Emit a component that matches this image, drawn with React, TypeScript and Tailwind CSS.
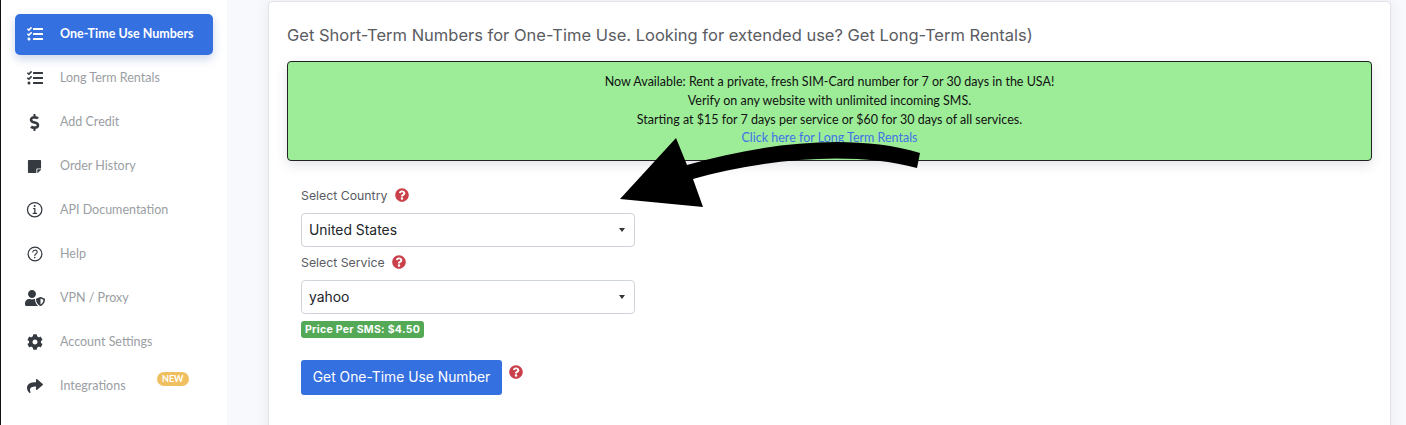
import React from 'react';
import { FaTasks, FaDollarSign, FaStickyNote, FaUserShield, FaCog, FaShare, FaQuestionCircle } from 'react-icons/fa';
import { IoInformationCircleOutline, IoHelpCircleOutline } from 'react-icons/io5';

const navItems = [
  { label: 'One-Time Use Numbers', icon: <FaTasks size={16} />, active: true },
  { label: 'Long Term Rentals', icon: <FaTasks size={16} /> },
  { label: 'Add Credit', icon: <FaDollarSign size={17} /> },
  { label: 'Order History', icon: <FaStickyNote size={15} /> },
  { label: 'API Documentation', icon: <IoInformationCircleOutline size={20} /> },
  { label: 'Help', icon: <IoHelpCircleOutline size={20} /> },
  { label: 'VPN / Proxy', icon: <FaUserShield size={20} /> },
  { label: 'Account Settings', icon: <FaCog size={16} /> },
  { label: 'Integrations', icon: <FaShare size={16} />, badge: 'NEW' },
];

function HelpDot({ className = '' }: { className?: string }) {
  return <FaQuestionCircle size={14} className={`text-[#c9404a] ${className}`} />;
}

function FakeSelect({ value }: { value: string }) {
  return (
    <div className="flex h-[34px] w-[334px] items-center justify-between rounded-[4px] border border-[#ced4da] bg-white pl-[7px] pr-[9px] font-['Inter',sans-serif] text-[13.9px] text-[#212529]">
      <span>{value}</span>
      <span className="h-0 w-0 border-x-[3px] border-t-[4px] border-x-transparent border-t-[#333]" />
    </div>
  );
}

export default function App() {
  return (
    <div className="relative flex h-[425px] w-[1406px] overflow-hidden bg-[#f8f9fc] font-['Lato',sans-serif]">
      <aside className="h-full w-[227px] shrink-0 border-l border-[#111] bg-white pl-[14px] pr-[14px] pt-[14px]">
        {navItems.map(item => (
          <div
            key={item.label}
            className={`relative mb-[3px] flex h-[41px] items-center rounded-[5px] pb-[1px] text-[12.5px] ${
              item.active
                ? 'bg-[#3570e0] font-bold text-white shadow-[0_4px_10px_rgba(53,90,170,0.25)]'
                : 'text-[#9a9ea3]'
            }`}
          >
            <span className={`flex w-[39px] shrink-0 justify-center ${item.active ? 'text-white' : 'text-[#343a40]'}`}>
              {item.icon}
            </span>
            <span className="pl-[6px]">{item.label}</span>
            {item.badge && (
              <span className="absolute left-[142px] top-[6px] rounded-full bg-[#f0c060] px-[5px] text-[9px] font-bold leading-[14px] text-white">
                {item.badge}
              </span>
            )}
          </div>
        ))}
      </aside>

      <main className="flex-1 pl-[41px] pr-[15px] pt-[1px]">
        <div className="h-[440px] rounded-[4px] border border-[#e3e4e8] bg-white pl-[18px] pr-[18px] pt-[23px] shadow-[0_0_14px_rgba(60,70,100,0.08)]">
          <h1 className="font-['Inter',sans-serif] text-[16.5px] leading-[21px] text-[#5a5c62]">
            Get Short-Term Numbers for One-Time Use. Looking for extended use? Get Long-Term Rentals)
          </h1>

          <div className="mt-[15px] h-[100px] rounded-[4px] border border-[#222] bg-[#9ded98] pt-[11px] text-center text-[12.5px] leading-[18.75px] text-[#111] shadow-[0_4px_12px_rgba(60,70,100,0.15)]">
            <p>Now Available: Rent a private, fresh SIM-Card number for 7 or 30 days in the USA!</p>
            <p>Verify on any website with unlimited incoming SMS.</p>
            <p>Starting at $15 for 7 days per service or $60 for 30 days of all services.</p>
            <a className="block text-[#3f73e6]">Click here for Long Term Rentals</a>
          </div>

          <form className="pl-[14px] pt-[26px]">
            <div className="flex h-[19px] items-center font-['Inter',sans-serif] text-[12.3px] text-[#5a5c62]">
              Select Country
              <HelpDot className="mb-[3px] ml-[8px]" />
            </div>
            <div className="mt-[7px]">
              <FakeSelect value="United States" />
            </div>
            <div className="mt-[7px] flex h-[19px] items-center font-['Inter',sans-serif] text-[12.3px] text-[#5a5c62]">
              Select Service
              <HelpDot className="mb-[3px] ml-[7px]" />
            </div>
            <div className="mt-[7px]">
              <FakeSelect value="yahoo" />
            </div>
            <span className="mt-[7px] block w-fit rounded-[3px] bg-[#54a957] px-[4px] font-['Inter',sans-serif] text-[10.5px] font-bold leading-[17px] tracking-[0.3px] text-white">
              Price Per SMS: $4.50
            </span>
            <div className="mt-[22px] flex items-start">
              <button type="button" className="h-[35px] w-[201px] rounded-[3px] bg-[#3570e0] font-['Inter',sans-serif] text-[13.85px] text-white">
                Get One-Time Use Number
              </button>
              <HelpDot className="ml-[7px] mt-[5px]" />
            </div>
          </form>
        </div>
      </main>

      {/* hand-drawn arrow pasted over the screenshot */}
      <svg className="absolute left-0 top-0" width="1406" height="425" viewBox="0 0 1406 425">
        <path
          d="M620 199 L676 138 L687 165 C760 144 850 132 920 153 L917 168 C850 150 760 160 693 179 L703 207 Z"
          fill="#000"
        />
      </svg>
    </div>
  );
}
